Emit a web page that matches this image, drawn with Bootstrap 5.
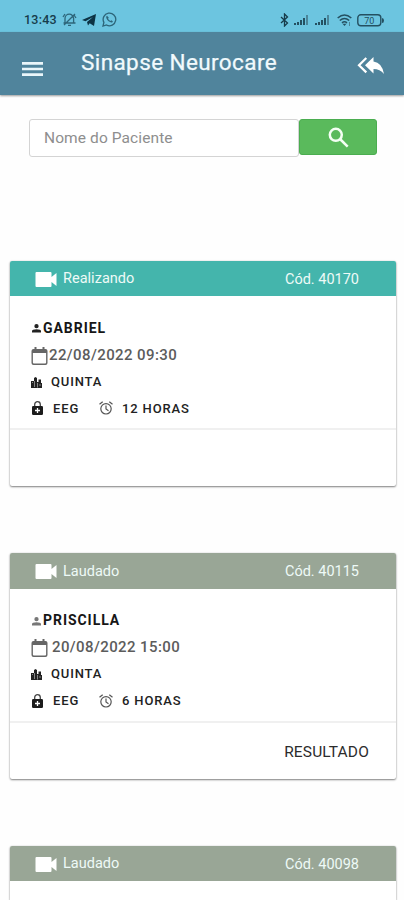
<!DOCTYPE html>
<html lang="pt-BR">
<head>
<meta charset="utf-8">
<meta name="viewport" content="width=device-width, initial-scale=1">
<title>Sinapse Neurocare</title>
<link href="https://cdn.jsdelivr.net/npm/bootstrap@5.3.0/dist/css/bootstrap.min.css" rel="stylesheet">
<style>
body{font-family:Roboto,"Liberation Sans",sans-serif;background:#fefefe;height:900px;overflow:hidden}
svg{display:block;flex:none}
.status-strip{height:32px;background:#6cc5e0;color:#173c4b;padding:8px 20px 0 24px}
.clock{font-size:12.5px;font-weight:500;letter-spacing:.25px;line-height:24px;width:38px}
.app-head{height:63px;background:#50849c;padding:0 20px 0 22px;box-shadow:0 1px 2px rgba(0,0,0,.4)}
.app-title{font-size:22.5px;line-height:61px;letter-spacing:.4px;color:#f1fafd;margin-left:38px;-webkit-text-stroke:.25px #f1fafd}
.search-row{padding:24px 27px 0 29px;height:165.5px}
.search-row .form-control{width:270px;flex:none;height:38px;border:1.5px solid #d4d4d4;border-radius:3px;padding:0 14px;font-size:15.5px;letter-spacing:.1px;background:#fff}
.search-row .form-control::placeholder{color:#8e8e8e}
.btn-find{width:78px;height:36px;background:#5aba5c;border-radius:3px;border:1px solid #4bad50}
.exam{margin:0 8px 67px 10px;height:225.5px;border:0;border-radius:2px;box-shadow:0 1px 2px rgba(0,0,0,.48),0 0 2px rgba(0,0,0,.12);background:#fff}
.exam-last{height:54px;margin-bottom:0;border-radius:2px 2px 0 0}
.exam-head{height:35.5px;border-radius:2px 2px 0 0;color:#eefaf7;font-size:14.5px;padding:0 37px 0 25px;background:#99a696}
.exam-head.running{background:#44b5ac}
.exam-head svg{margin-top:2px}
.exam-head .state{margin-left:6px;width:200px;letter-spacing:.02px;padding-top:2px}
.exam-head .code{letter-spacing:0;padding-top:3px}
.exam-info{height:134px;padding:18.5px 0 0 21px;border-bottom:2px solid #f0f0f0;color:#222}
.line{height:26.7px;font-weight:500;font-size:13px;letter-spacing:.85px}
.line>span{padding-top:1px}
.line .who{font-size:14px;letter-spacing:.95px;font-weight:700;color:#161616}
.line .when{font-size:15px;letter-spacing:.4px;color:#5c5c5c}
.exam-foot{font-size:15.5px;letter-spacing:.15px;color:#2c2c2c;padding:5px 27px 0 0}
.exam-foot .btn{font-size:inherit;color:inherit;letter-spacing:inherit}
</style>
<script src="https://cdn.jsdelivr.net/npm/bootstrap@5.3.0/dist/js/bootstrap.bundle.min.js"></script>
</head>
<body>
<svg width="0" height="0" class="position-absolute" aria-hidden="true">
<symbol id="cam" viewBox="0 0 21 15"><path fill="#fff" d="M1 0h14q1 0 1 1v4l5-4v13l-5-4v4q0 1-1 1H1q-1 0-1-1V1q0-1 1-1z"/></symbol>
<symbol id="user" viewBox="0 0 10 10"><path fill="currentColor" d="M5 0a2.4 2.4 0 1 1 0 4.800A2.4 2.4 0 0 1 5 0zM0 9.500V8q0-2.200 5-2.200T10 8v1.500z"/></symbol>
<symbol id="cal" viewBox="0 0 16 18"><path fill="#666" d="M3 0h2v2h6V0h2v2h1q2 0 2 2v12q0 2-2 2H2q-2 0-2-2V4q0-2 2-2h1zM1.400 6v9.600q0 1 1 1h11.200q1 0 1-1V6z"/></symbol>
<symbol id="city" viewBox="0 0 11 11"><path fill="#222" d="M0 4h3V1l1.500-1L6 1v4h1.500V2.500H10V6h1v5H0z"/><path stroke="#ccc" d="M3.500 4v6M6.500 6v4.500M1.500 5v1M9 7v2" stroke-width=".6"/></symbol>
<symbol id="lock" viewBox="0 0 11 14"><path fill="none" stroke="#444" stroke-width="1.300" d="M2.700 6V3.500a2.800 2.800 0 0 1 5.600 0V6"/><rect y="5" width="11" height="9" rx="1.200" fill="#1c1c1c"/><path stroke="#fff" stroke-width="1.300" d="M5.500 7v5M3 9.500h5"/></symbol>
<symbol id="alarm" viewBox="0 0 14 14"><g fill="none" stroke="#555" stroke-width="1.200"><circle cx="7" cy="7.800" r="5.200"/><path d="M7 4.500V8l2.500 1.700M.5 3.300 3.700.7M13.500 3.300 10.300.7"/></g></symbol>
<symbol id="bars" viewBox="0 0 15 10"><path fill="#245061" d="M0 8h2v2H0zM3 7h2v3H3zM6 5h2v5H6zM9 3h2v7H9z"/><path fill="#4a8599" d="M12 0h2v10h-2z"/></symbol>
</svg>

<div class="status-strip d-flex align-items-start">
  <span class="clock">13:43</span>
  <svg class="mt-1" width="15" height="15" viewBox="0 0 15 15" fill="none" stroke="#2d6579" stroke-width="1.300"><path d="M3 11V6.500a4.300 4.300 0 0 1 8.600 0V11M1.500 11h12M6 13.300h3M2 13 13 2M1 5l2-3M14 6l-2-3"/></svg>
  <svg style="margin:6px 0 0 5px" width="14" height="12" viewBox="0 0 14 12"><path fill="#0d3344" d="M0 6 14 0l-2 12-4.300-2.700L6 11.500 5 8l6-5-7.500 4.300z"/></svg>
  <svg style="margin:4px 0 0 6px" width="15" height="15" viewBox="0 0 15 15"><path fill="none" stroke="#2d6579" stroke-width="1.300" d="m1 14 .9-3.600A6.300 6.300 0 1 1 4.500 13z"/><path fill="#2d6579" d="M5 3.800c-1.800 1-.2 4 1.600 5.500s4 1.500 4.300.2L9.400 8.300l-1 .7Q6.800 8.300 6 6.700l.8-.9z"/></svg>
  <svg class="ms-auto" style="margin-top:5px" width="9" height="14" viewBox="0 0 9 14"><path fill="none" stroke="#173c4b" stroke-width="1.300" d="m1 4 6.500 6L4.500 13V1l3 3L1 10"/></svg>
  <svg style="margin:7px 0 0 5px" width="15" height="10"><use href="#bars"/></svg>
  <svg style="margin:7px 0 0 6px" width="15" height="10"><use href="#bars"/></svg>
  <svg style="margin:6px 0 0 7px" width="15" height="12" viewBox="0 0 15 12"><path fill="none" stroke="#245061" stroke-width="1.600" d="M.7 4q6.800-6 13.600 0M2.800 6.500q4.700-4 9.400 0M5 8.800q2.500-2 5 0"/><path fill="#245061" d="m7.500 12-2-2.300h4z"/><path stroke="#4a8599" d="M12.500 8v4"/></svg>
  <svg style="margin:6px 0 0 5px" width="27" height="13" viewBox="0 0 27 13"><rect x=".8" y=".8" width="23" height="11" rx="3" fill="none" stroke="#245061" stroke-width="1.400"/><path fill="#245061" d="M25 4q2 0 2 2.500T25 9z"/><text x="12.300" y="9.700" text-anchor="middle" font-family="Roboto" font-size="9" fill="#245061">70</text></svg>
</div>

<nav class="app-head d-flex align-items-start">
  <svg style="margin-top:29px" width="21" height="16" viewBox="0 0 21 16"><path stroke="#eaf6fa" stroke-width="2.700" d="M0 2.300h21M0 8h21M0 13.700h21"/></svg>
  <span class="app-title">Sinapse Neurocare</span>
  <svg class="ms-auto" style="margin-top:25px" width="27" height="18" viewBox="0 0 27 18"><path fill="#fff" d="M16.500 0v4.500Q25 5.500 27 17q-4-5-10.500-5v4.500L8 8.200z"/><path fill="none" stroke="#fff" stroke-width="2.200" d="M9.300 1 2 8.200l7.300 7.200"/></svg>
</nav>

<form class="search-row d-flex align-items-start">
  <input class="form-control" type="text" placeholder="Nome do Paciente" aria-label="Nome do Paciente">
  <button class="btn btn-find p-0 d-flex align-items-center justify-content-center" type="button" aria-label="Buscar">
    <svg width="21" height="21" viewBox="0 0 21 21" fill="none" stroke="#f4fff4" stroke-width="2.500"><circle cx="7.800" cy="7.800" r="6"/><path d="m12 12 7.700 7.700"/></svg>
  </button>
</form>

<main>
  <article class="card exam">
    <div class="exam-head running d-flex align-items-center">
      <svg width="22" height="15"><use href="#cam"/></svg><span class="state">Realizando</span><span class="code ms-auto text-nowrap">Cód. 40170</span>
    </div>
    <div class="exam-info">
      <div class="line d-flex align-items-center"><svg style="margin:2px 2px 0 1px" width="9" height="9"><use href="#user"/></svg><span class="who">GABRIEL</span></div>
      <div class="line d-flex align-items-center"><svg width="17" height="18" style="margin:2px 1px 0 0"><use href="#cal"/></svg><span class="when">22/08/2022 09:30</span></div>
      <div class="line d-flex align-items-center"><svg style="margin:2px 9px 0 0" width="11" height="11"><use href="#city"/></svg><span>QUINTA</span></div>
      <div class="line d-flex align-items-center"><svg style="margin:1px 10px 0 1px" width="11" height="14"><use href="#lock"/></svg><span style="width:46px">EEG</span><svg style="margin:1px 9px 0 0" width="14" height="14"><use href="#alarm"/></svg><span>12 HORAS</span></div>
    </div>
    <div class="exam-foot"></div>
  </article>

  <article class="card exam">
    <div class="exam-head d-flex align-items-center">
      <svg width="22" height="15"><use href="#cam"/></svg><span class="state">Laudado</span><span class="code ms-auto text-nowrap">Cód. 40115</span>
    </div>
    <div class="exam-info">
      <div class="line d-flex align-items-center"><svg style="margin:2px 2px 0 1px;color:#777" width="9" height="9"><use href="#user"/></svg><span class="who">PRISCILLA</span></div>
      <div class="line d-flex align-items-center"><svg width="17" height="18" style="margin:2px 4px 0 0"><use href="#cal"/></svg><span class="when">20/08/2022 15:00</span></div>
      <div class="line d-flex align-items-center"><svg style="margin:2px 9px 0 0" width="11" height="11"><use href="#city"/></svg><span>QUINTA</span></div>
      <div class="line d-flex align-items-center"><svg style="margin:1px 10px 0 1px" width="11" height="14"><use href="#lock"/></svg><span style="width:46px">EEG</span><svg style="margin:1px 9px 0 0" width="14" height="14"><use href="#alarm"/></svg><span>6 HORAS</span></div>
    </div>
    <div class="exam-foot flex-grow-1 d-flex align-items-center justify-content-end"><button type="button" class="btn border-0 p-0">RESULTADO</button></div>
  </article>

  <article class="card exam exam-last">
    <div class="exam-head d-flex align-items-center">
      <svg width="22" height="15"><use href="#cam"/></svg><span class="state">Laudado</span><span class="code ms-auto text-nowrap">Cód. 40098</span>
    </div>
  </article>
</main>
</body>
</html>
